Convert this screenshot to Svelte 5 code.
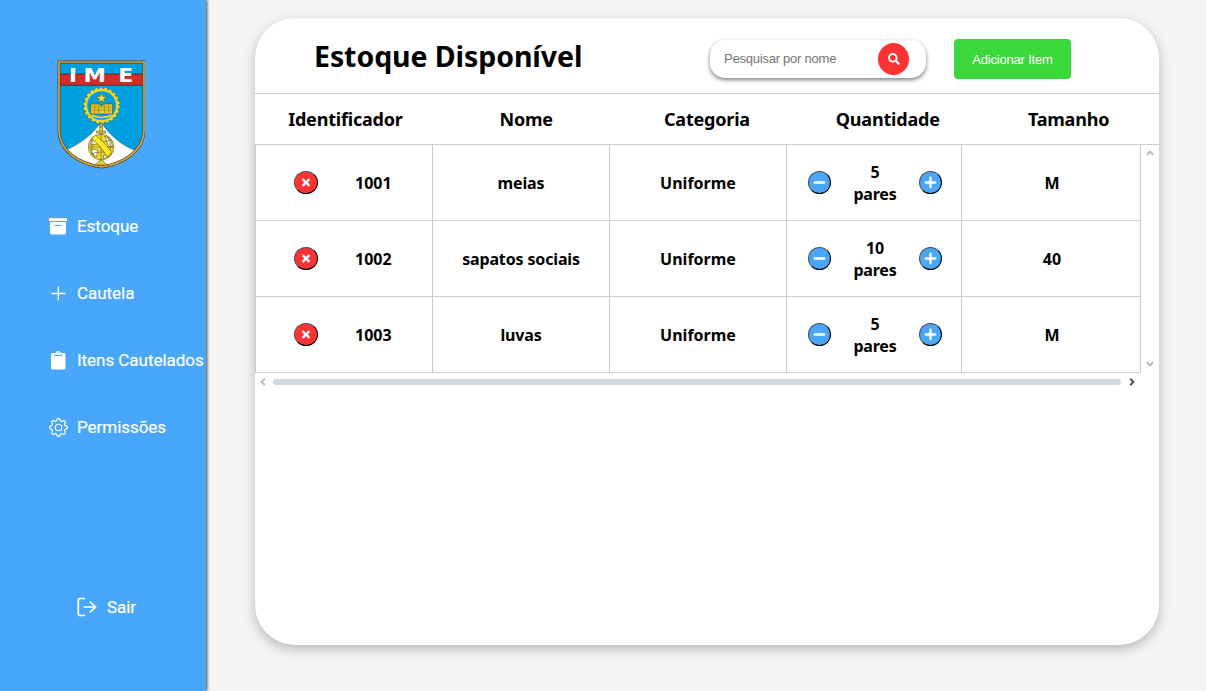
<script>
  const columns = ['Identificador', 'Nome', 'Categoria', 'Quantidade', 'Tamanho'];
  let items = $state([
    { id: 1001, name: 'meias', category: 'Uniforme', amount: 5, size: 'M' },
    { id: 1002, name: 'sapatos sociais', category: 'Uniforme', amount: 10, size: '40' },
    { id: 1003, name: 'luvas', category: 'Uniforme', amount: 5, size: 'M' }
  ]);
</script>

<div class="page">
  <aside>
    <svg class="crest" width="88" height="110" viewBox="0 0 88 110">
      <defs>
        <clipPath id="shield"><path d="M2 2H87V70C87 91 66 104 44.5 107C22 104 2 91 2 70Z" /></clipPath>
      </defs>
      <g clip-path="url(#shield)">
        <rect width="88" height="110" fill="#009fe0" />
        <rect y="14" width="88" height="11" fill="#d52b27" />
        <path d="M0 14H88M0 25.3H88" stroke="#382c28" stroke-width=".8" />
        <path d="M0 93C17 89 36 75 44 62C53 77 70 90 88 93V110H0Z" fill="#fff" stroke="#5c7380" stroke-width=".6" />
      </g>
      <path d="M2 2H87V70C87 91 66 104 44.5 107C22 104 2 91 2 70Z" fill="none" stroke="#4a3d20" stroke-width="2.9" />
      <path d="M2 2H87V70C87 91 66 104 44.5 107C22 104 2 91 2 70Z" fill="none" stroke="#d9a33b" stroke-width="1.7" />
      <g class="initials">
        <text x="12" y="22.2" textLength="8" lengthAdjust="spacingAndGlyphs">I</text>
        <text x="26.6" y="22.2" textLength="22.5" lengthAdjust="spacingAndGlyphs">M</text>
        <text x="61.2" y="22.2" textLength="15" lengthAdjust="spacingAndGlyphs">E</text>
      </g>
      <g transform="translate(.6 0)">
        <circle cx="44" cy="45.5" r="17" fill="none" stroke="#4d5420" stroke-width="3" stroke-dasharray="3 1.85" />
        <circle cx="44" cy="45.5" r="15.5" fill="none" stroke="#e7d331" stroke-width="2.3" />
        <circle cx="44" cy="45.5" r="17" fill="none" stroke="#f1db27" stroke-width="2.3" stroke-dasharray="2.8 2.05" />
        <path d="M44 33L45.3 36.5L49 36.7L46.1 39L47.2 42.5L44 40.5L40.8 42.5L41.9 39L39 36.7L42.7 36.5Z" fill="#f6df26" stroke="#6e6921" stroke-width=".5" />
        <path d="M33 44H41L44 46L47 44H55V54H33Z" fill="#e3c92c" stroke="#565023" stroke-width=".6" />
        <path d="M34 47H54M34 50H54M37 45V53M41 45V53M47 45V53M51 45V53" stroke="#806f22" stroke-width=".5" />
        <path d="M34 55Q44 60 54 55" fill="none" stroke="#f1db27" stroke-width="1.5" />
      </g>
      <g stroke="#5c5420" stroke-width=".6" transform="translate(.6 0)">
        <circle cx="43.5" cy="87" r="12.8" fill="#f2dc31" />
        <path d="M34 79L39 76L40 84L33 85ZM47 76L53 80L55 87L51 86ZM33 89L40 90L39 97L34 93ZM46 95L51 96L46 99Z" fill="#fff" />
        <path d="M43.5 74V100M31 87H56M37 76Q31 87 37 98M50 76Q56 87 50 98M33 80Q44 84 54 80M33 94Q44 90 54 94" fill="none" />
        <path d="M34 78L38 75Q47 82 54 92L50 97Q44 87 34 78Z" fill="#ffea26" />
        <path d="M42 67H45V74H42Z" fill="#f2dc31" />
        <circle cx="43.5" cy="65" r="1.8" fill="#b6aa52" />
        <path d="M39 71H48V73H39ZM40 103L42 100H45L47 103L51 105H36Z" fill="#e4cc2d" />
      </g>
    </svg>
    <nav>
      <a href="#estoque">
        <svg width="20" height="20" viewBox="0 0 20 20"><path fill="#fff" d="M1 2.2H19V5H1ZM2 6H18V16Q18 18.6 15.5 18.6H4.5Q2 18.6 2 16Z" /><path d="M7 9.5H13" stroke="#48a7fa" stroke-width="1.2" stroke-linecap="round" /></svg>
        Estoque
      </a>
      <a href="#cautela">
        <svg width="20" height="20" viewBox="0 0 20 20"><path d="M10.4 3.5V17.5M3.4 10.5H17.4" stroke="#fff" stroke-width="1.35" /></svg>
        Cautela
      </a>
      <a href="#itens">
        <svg width="20" height="20" viewBox="0 0 20 20"><path fill="#fff" d="M4.5 3H7.7Q8 1 10.3 1Q12 1 12.6 3H16Q17.5 3 17.5 4.5V18Q17.5 19.6 16 19.6H4.5Q3 19.6 3 18V4.5Q3 3 4.5 3Z" /><path d="M6.6 4.4V5.6H13.9V4.4" fill="none" stroke="#48a7fa" /><circle cx="10.2" cy="3" r=".8" fill="#48a7fa" /></svg>
        Itens Cautelados
      </a>
      <a href="#permissoes">
        <svg class="gear" width="19" height="19" viewBox="0 0 16 16" fill="#fff"><path d="M8 4.754a3.246 3.246 0 1 0 0 6.492 3.246 3.246 0 0 0 0-6.492zM5.754 8a2.246 2.246 0 1 1 4.492 0 2.246 2.246 0 0 1-4.492 0z" /><path d="M9.796 1.343c-.527-1.79-3.065-1.79-3.592 0l-.094.319a.873.873 0 0 1-1.255.52l-.292-.16c-1.64-.892-3.433.902-2.54 2.541l.159.292a.873.873 0 0 1-.52 1.255l-.319.094c-1.79.527-1.79 3.065 0 3.592l.319.094a.873.873 0 0 1 .52 1.255l-.16.292c-.892 1.64.901 3.434 2.541 2.54l.292-.159a.873.873 0 0 1 1.255.52l.094.319c.527 1.79 3.065 1.79 3.592 0l.094-.319a.873.873 0 0 1 1.255-.52l.292.16c1.64.893 3.434-.902 2.54-2.541l-.159-.292a.873.873 0 0 1 .52-1.255l.319-.094c1.79-.527 1.79-3.065 0-3.592l-.319-.094a.873.873 0 0 1-.52-1.255l.16-.292c.893-1.64-.902-3.433-2.541-2.54l-.292.159a.873.873 0 0 1-1.255-.52l-.094-.319zm-2.633.283c.246-.835 1.428-.835 1.674 0l.094.319a1.873 1.873 0 0 0 2.693 1.115l.291-.16c.764-.415 1.6.42 1.184 1.185l-.159.292a1.873 1.873 0 0 0 1.116 2.692l.318.094c.835.246.835 1.428 0 1.674l-.319.094a1.873 1.873 0 0 0-1.115 2.693l.16.291c.415.764-.42 1.6-1.185 1.184l-.291-.159a1.873 1.873 0 0 0-2.693 1.116l-.094.318c-.246.835-1.428.835-1.674 0l-.094-.319a1.873 1.873 0 0 0-2.692-1.115l-.292.16c-.764.415-1.6-.42-1.184-1.185l.159-.291A1.873 1.873 0 0 0 1.945 8.93l-.319-.094c-.835-.246-.835-1.428 0-1.674l.319-.094A1.873 1.873 0 0 0 3.06 4.377l-.16-.292c-.415-.764.42-1.6 1.185-1.184l.292.159a1.873 1.873 0 0 0 2.692-1.115l.094-.319z" /></svg>
        Permissões
      </a>
    </nav>
    <a class="exit" href="#sair">
      <svg width="20" height="20" viewBox="0 0 20 20" fill="none" stroke="#fff" stroke-width="1.7"><path d="M8 1.5H3Q1.3 1.5 1.3 3.2V16.8Q1.3 18.5 3 18.5H8M6.5 10H18.5M12.8 4.7L18.5 10L12.8 15.3" /></svg>
      Sair
    </a>
  </aside>

  <main>
    <header>
      <h1>Estoque Disponível</h1>
      <form class="search">
        <input placeholder="Pesquisar por nome" />
        <button type="button" aria-label="Pesquisar">
          <svg width="12" height="12" viewBox="0 0 12 12" fill="none" stroke="#fff"><circle cx="4.8" cy="4.8" r="3.8" stroke-width="1.9" /><path d="M7.7 7.7L11.3 11.3" stroke-width="2.2" /></svg>
        </button>
      </form>
      <button class="add">Adicionar Item</button>
    </header>
    <div class="labels">
      {#each columns as label}<span>{label}</span>{/each}
    </div>
    <div class="scroller">
      <div class="rows">
        {#each items as item (item.id)}
          <div class="row">
            <div class="cell ident">
              <button class="round remove" aria-label="Remover"><svg width="24" height="23" viewBox="0 0 24 23"><path d="M8.6 8.1L15.4 14.9M15.4 8.1L8.6 14.9" stroke="#fff" stroke-width="2.2" /></svg></button>
              <span>{item.id}</span>
            </div>
            <div class="cell name">{item.name}</div>
            <div class="cell">{item.category}</div>
            <div class="cell amount">
              <button class="round" aria-label="Diminuir" onclick={() => item.amount--}><svg width="23" height="23" viewBox="0 0 23 23"><path d="M6.7 11.5H16.3" stroke="#fff" stroke-width="2.3" stroke-linecap="round" /></svg></button>
              <span>{item.amount}<br />pares</span>
              <button class="round" aria-label="Aumentar" onclick={() => item.amount++}><svg width="23" height="23" viewBox="0 0 23 23"><path d="M6.7 11.5H16.3M11.5 6.7V16.3" stroke="#fff" stroke-width="2.3" stroke-linecap="round" /></svg></button>
            </div>
            <div class="cell size">{item.size}</div>
          </div>
        {/each}
      </div>
      <div class="vbar">
        <svg width="8" height="6" viewBox="0 0 8 6"><path d="M.8 4.8L4 1.6L7.2 4.8" /></svg>
        <svg width="8" height="6" viewBox="0 0 8 6"><path d="M.8 1.2L4 4.4L7.2 1.2" /></svg>
      </div>
      <div class="hbar">
        <svg width="6" height="8" viewBox="0 0 6 8"><path d="M4.8 .8L1.6 4L4.8 7.2" /></svg>
        <div class="thumb"></div>
        <svg class="on" width="6" height="8" viewBox="0 0 6 8"><path d="M1.2 .8L4.4 4L1.2 7.2" /></svg>
      </div>
    </div>
  </main>
</div>

<style>
  :global(body) { margin: 0; background: #f4f4f4; }
  * { box-sizing: border-box; }
  .page { display: flex; height: 691px; overflow: hidden; background: #f4f4f4; }
  aside {
    width: 206px; height: 691px; flex: none; padding-top: 60px; background: #48a7fa;
    box-shadow: 1px 0 3px rgba(0, 0, 0, .75); font: 400 17px/20px Roboto, sans-serif;
  }
  .crest { display: block; margin-left: 57px; }
  .initials { font: 700 20px "DejaVu Sans", sans-serif; fill: #fff; }
  nav { display: flex; flex-direction: column; gap: 47px; margin: 46px 0 0 48px; }
  a { display: flex; align-items: center; gap: 9px; color: #fff; text-decoration: none; white-space: nowrap; height: 20px; letter-spacing: -.04px; -webkit-text-stroke: .2px #fff; }
  a svg { flex: none; }
  .gear { margin: 0 0 0 1px; }
  .exit { margin: 160px 0 0 77px; gap: 10px; }
  main {
    width: 904px; height: 627px; margin: 18px 0 0 49px; background: #fff; border-radius: 40px; overflow: hidden;
    box-shadow: 0 4px 12px rgba(0, 0, 0, .25); font: 700 16px/22px "Noto Sans", sans-serif; color: #000;
  }
  header { display: flex; height: 76px; padding-left: 59px; border-bottom: 1px solid #ccc; }
  h1 { width: 396px; margin: 18px 0 0; font-size: 28.5px; line-height: 40px; letter-spacing: -.08px; white-space: nowrap; }
  button { padding: 0; border: 0; cursor: pointer; }
  .search { display: flex; align-items: center; width: 216px; height: 38px; margin-top: 22px; border-radius: 15px; box-shadow: 0 2px 4px rgba(0, 0, 0, .5); }
  input { width: 154px; height: 18px; margin: -2px 0 0 14px; padding: 0; border: 0; outline: 0; background: none; font: 13px "Liberation Sans", Arial, sans-serif; letter-spacing: -.23px; }
  input::placeholder { color: #757575; opacity: 1; }
  .search button { display: grid; place-items: center; width: 31px; height: 32px; border-radius: 50%; background: #fd3235; }
  .add { width: 117px; height: 40px; margin: 21px 0 0 28px; border-radius: 4px; background: #3ad83a; color: #fff; font: 13px "Liberation Sans", Arial, sans-serif; letter-spacing: -.2px; }
  .labels { display: grid; grid-template-columns: repeat(5, 1fr); height: 50px; align-items: center; text-align: center; font-size: 18px; letter-spacing: -.2px; }
  .scroller { display: grid; grid-template: 228px 17px / 886px 18px; border-top: 1px solid #ccc; }
  .rows { border-left: 1px solid #ccc; }
  .row { display: grid; grid-template-columns: 177px 177px 177px 175px 179px; height: 76px; border-bottom: 1px solid #ccc; }
  .cell { display: flex; align-items: center; justify-content: center; border-right: 1px solid #ccc; text-align: center; padding-top: 1px; }
  .name { letter-spacing: -.15px; }
  .size { padding-left: 2px; }
  .ident { justify-content: flex-start; padding: 0 0 0 38px; }
  .ident span { margin: 1px 0 0 37px; }
  .amount { justify-content: space-between; padding: 0 19px 0 21px; }
  .amount span { letter-spacing: -.2px; }
  .round { display: grid; place-items: center; flex: none; width: 23px; height: 23px; border: 1px outset #000; border-radius: 50%; background: #48a7fa; }
  .round svg { flex: none; margin: -1px; }
  .remove { width: 24px; background: #fd3235; }
  .vbar { display: flex; flex-direction: column; align-items: center; justify-content: space-between; padding: 5px 1px 6px 0; }
  .hbar { display: flex; align-items: center; padding-left: 5px; }
  .hbar svg, .vbar svg { fill: none; stroke: #b9b9b9; stroke-width: 2; }
  .hbar .on { stroke: #555; margin-left: 8px; }
  .thumb { width: 848px; height: 6px; margin-left: 7px; border-radius: 3px; background: #d0dae3; }
</style>
